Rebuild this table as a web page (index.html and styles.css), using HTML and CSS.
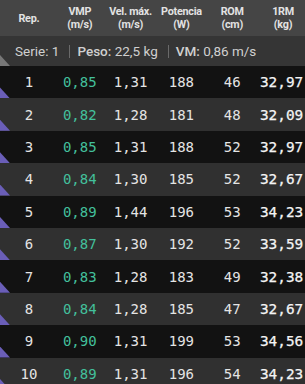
FILE: index.html
```html
<!DOCTYPE html>
<html lang="es">
<head>
<meta charset="utf-8">
<link rel="stylesheet" href="styles.css">
</head>
<body>
<div class="table">
  <div class="head row-grid">
    <div class="hc">Rep.</div>
    <div class="hc">VMP<br>(m/s)</div>
    <div class="hc">Vel. máx.<br>(m/s)</div>
    <div class="hc">Potencia<br>(W)</div>
    <div class="hc">ROM<br>(cm)</div>
    <div class="hc">1RM<br>(kg)</div>
  </div>
  <div class="serie">
    <span>Serie: 1</span><span class="sep"></span><span><b>Peso:</b> 22,5 kg</span><span class="sep"></span><span><b>VM:</b> 0,86 m/s</span>
  </div>
  <div class="row row-grid dark"><div>1</div><div class="g">0,85</div><div>1,31</div><div>188</div><div>46</div><div class="rm">32,97</div></div>
  <div class="row row-grid light"><div>2</div><div class="g">0,82</div><div>1,28</div><div>181</div><div>48</div><div class="rm">32,09</div></div>
  <div class="row row-grid dark"><div>3</div><div class="g">0,85</div><div>1,31</div><div>188</div><div>52</div><div class="rm">32,97</div></div>
  <div class="row row-grid light"><div>4</div><div class="g">0,84</div><div>1,30</div><div>185</div><div>52</div><div class="rm">32,67</div></div>
  <div class="row row-grid dark"><div>5</div><div class="g">0,89</div><div>1,44</div><div>196</div><div>53</div><div class="rm">34,23</div></div>
  <div class="row row-grid light"><div>6</div><div class="g">0,87</div><div>1,30</div><div>192</div><div>52</div><div class="rm">33,59</div></div>
  <div class="row row-grid dark"><div>7</div><div class="g">0,83</div><div>1,28</div><div>183</div><div>49</div><div class="rm">32,38</div></div>
  <div class="row row-grid light"><div>8</div><div class="g">0,84</div><div>1,28</div><div>185</div><div>47</div><div class="rm">32,67</div></div>
  <div class="row row-grid dark"><div>9</div><div class="g">0,90</div><div>1,31</div><div>199</div><div>53</div><div class="rm">34,56</div></div>
  <div class="row row-grid light"><div>10</div><div class="g">0,89</div><div>1,31</div><div>196</div><div>54</div><div class="rm">34,23</div></div>
</div>
</body>
</html>
```
FILE: styles.css
```css
html, body {
  margin: 0;
  padding: 0;
  background: #121212;
  overflow: hidden;
}
.table {
  width: 305px;
}
.row-grid {
  display: grid;
  grid-template-columns: repeat(6, 50.83px);
  padding-left: 3.5px;
  align-items: center;
  justify-items: center;
}
.head {
  height: 36px;
  background: #454545;
  color: #e2e2e2;
  font-family: Roboto, "Liberation Sans", sans-serif;
  font-weight: bold;
  font-size: 10.8px;
  line-height: 13px;
  text-align: center;
  letter-spacing: -0.25px;
}
.serie {
  position: relative;
  height: 30px;
  background: #353535;
  color: #d0d0d0;
  font-family: Roboto, "Liberation Sans", sans-serif;
  font-size: 13.5px;
  display: flex;
  align-items: center;
  padding-left: 15px;
  box-sizing: border-box;
}
.serie b {
  font-weight: 500;
}
.sep {
  display: inline-block;
  width: 1px;
  height: 13px;
  background: #6a6a6a;
  margin: 0 7px 0 10px;
}
.serie::before {
  content: "";
  position: absolute;
  left: 0;
  bottom: 0;
  width: 10px;
  height: 11px;
  background: #777;
  clip-path: polygon(0 0, 100% 100%, 0 100%);
}
.row {
  position: relative;
  height: 32.4px;
  color: #e4e4e4;
  font-family: "DejaVu Sans Mono", monospace;
  font-size: 14px;
}
.row::before {
  content: "";
  position: absolute;
  left: 0;
  bottom: 0;
  width: 10px;
  height: 11px;
  background: #6a5eb8;
  clip-path: polygon(0 0, 100% 100%, 0 100%);
}
.dark { background: #121212; }
.light { background: #303030; }
.g { color: #43c09c; }
.rm {
  font-size: 14.4px;
  color: #f4f4f4;
  -webkit-text-stroke: 0.25px #f4f4f4;
  margin-right: 3px;
}
```
